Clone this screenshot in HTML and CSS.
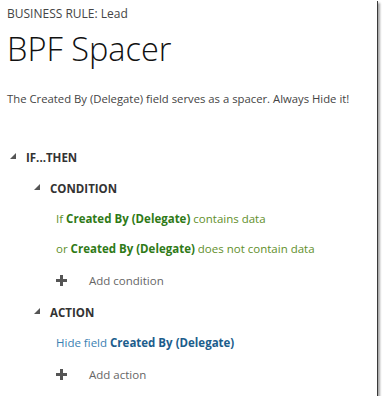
FILE: index.html
```html
<!DOCTYPE html>
<html lang="en">
<head>
    <meta charset="UTF-8">
    <title>BPF Spacer</title>
    <link rel="stylesheet" href="styles.css">
</head>
<body>
    <div class="frame">
        <div class="crumb">BUSINESS RULE: Lead</div>
        <h1 class="title">BPF Spacer</h1>
        <p class="desc">The Created By (Delegate) field serves as a spacer. Always Hide it!</p>

        <div class="node top">
            <svg class="tri" width="6" height="6" viewBox="0 0 6 6"><polygon points="0,6 6,6 6,0"/></svg>
            <span>IF...THEN</span>
        </div>

        <div class="node sub">
            <svg class="tri" width="6" height="6" viewBox="0 0 6 6"><polygon points="0,6 6,6 6,0"/></svg>
            <span>CONDITION</span>
        </div>
        <div class="line cond">If <b>Created By (Delegate)</b> contains data</div>
        <div class="line cond">or <b>Created By (Delegate)</b> does not contain data</div>
        <div class="add">
            <svg class="plus" width="11" height="11" viewBox="0 0 11 11"><path d="M5.5 0v11M0 5.5h11"/></svg>
            <span>Add condition</span>
        </div>

        <div class="node sub">
            <svg class="tri" width="6" height="6" viewBox="0 0 6 6"><polygon points="0,6 6,6 6,0"/></svg>
            <span>ACTION</span>
        </div>
        <div class="line act">Hide field <b>Created By (Delegate)</b></div>
        <div class="add">
            <svg class="plus" width="11" height="11" viewBox="0 0 11 11"><path d="M5.5 0v11M0 5.5h11"/></svg>
            <span>Add action</span>
        </div>
    </div>
</body>
</html>
```

FILE: styles.css
```css
body {
    margin: 0;
    background: #fff;
    font-family: "Open Sans", "Noto Sans", sans-serif;
}
.frame {
    width: 377px;
    height: 396px;
    box-sizing: border-box;
    padding: 5px 0 0 7px;
    background: #fff;
    box-shadow: 1px 1px 0 #3a3a3a, 3px 3px 2px rgba(0, 0, 0, 0.35);
}
.crumb {
    font-size: 12px;
    line-height: 18px;
    color: #444;
}
.title {
    margin: 4px 0 0;
    font-size: 32.5px;
    font-weight: 300;
    line-height: 44px;
    color: #111;
}
.desc {
    margin: 20px 0 0;
    font-size: 11.3px;
    line-height: 16px;
    color: #444;
}
.node {
    display: flex;
    align-items: center;
    height: 31px;
    font-size: 11.5px;
    font-weight: 700;
    color: #333;
}
.node.top {
    margin-top: 35px;
    padding-left: 3px;
}
.node.sub {
    padding-left: 27px;
}
.tri {
    fill: #555;
    margin-right: 10px;
    margin-top: -3px;
}
.line {
    height: 30px;
    line-height: 30px;
    padding-left: 49px;
    font-size: 11.5px;
}
.cond {
    color: #5f8f2a;
}
.cond b {
    color: #2f7a17;
    font-weight: 700;
}
.act {
    color: #3a7fb2;
}
.act b {
    color: #1c5d8c;
    font-weight: 700;
}
.add {
    display: flex;
    align-items: center;
    height: 33px;
    padding-left: 49px;
    font-size: 11.5px;
    color: #666;
}
.plus {
    stroke: #555;
    stroke-width: 3;
    margin-right: 22px;
}
```
